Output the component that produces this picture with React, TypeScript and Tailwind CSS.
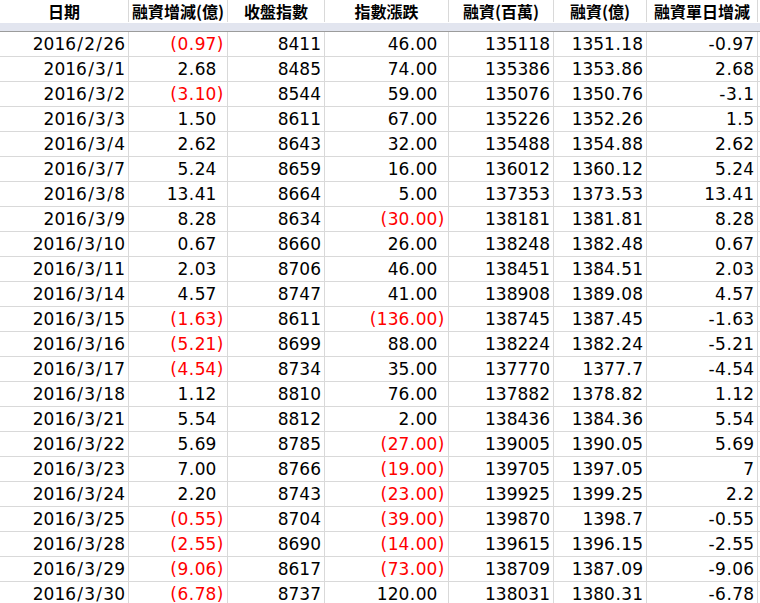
const headers = ["日期", "融資增減(億)", "收盤指數", "指數漲跌", "融資(百萬)", "融資(億)", "融資單日增減"];

const widths = ["w-[129px]", "w-[99px]", "w-[97px]", "w-[124px]", "w-[105px]", "w-[93px]", "w-[111px]"];

const rows = [
  ["2016/2/26", "-0.97", "8411", "46.00", "135118", "1351.18", "-0.97"],
  ["2016/3/1", "2.68", "8485", "74.00", "135386", "1353.86", "2.68"],
  ["2016/3/2", "-3.10", "8544", "59.00", "135076", "1350.76", "-3.1"],
  ["2016/3/3", "1.50", "8611", "67.00", "135226", "1352.26", "1.5"],
  ["2016/3/4", "2.62", "8643", "32.00", "135488", "1354.88", "2.62"],
  ["2016/3/7", "5.24", "8659", "16.00", "136012", "1360.12", "5.24"],
  ["2016/3/8", "13.41", "8664", "5.00", "137353", "1373.53", "13.41"],
  ["2016/3/9", "8.28", "8634", "-30.00", "138181", "1381.81", "8.28"],
  ["2016/3/10", "0.67", "8660", "26.00", "138248", "1382.48", "0.67"],
  ["2016/3/11", "2.03", "8706", "46.00", "138451", "1384.51", "2.03"],
  ["2016/3/14", "4.57", "8747", "41.00", "138908", "1389.08", "4.57"],
  ["2016/3/15", "-1.63", "8611", "-136.00", "138745", "1387.45", "-1.63"],
  ["2016/3/16", "-5.21", "8699", "88.00", "138224", "1382.24", "-5.21"],
  ["2016/3/17", "-4.54", "8734", "35.00", "137770", "1377.7", "-4.54"],
  ["2016/3/18", "1.12", "8810", "76.00", "137882", "1378.82", "1.12"],
  ["2016/3/21", "5.54", "8812", "2.00", "138436", "1384.36", "5.54"],
  ["2016/3/22", "5.69", "8785", "-27.00", "139005", "1390.05", "5.69"],
  ["2016/3/23", "7.00", "8766", "-19.00", "139705", "1397.05", "7"],
  ["2016/3/24", "2.20", "8743", "-23.00", "139925", "1399.25", "2.2"],
  ["2016/3/25", "-0.55", "8704", "-39.00", "139870", "1398.7", "-0.55"],
  ["2016/3/28", "-2.55", "8690", "-14.00", "139615", "1396.15", "-2.55"],
  ["2016/3/29", "-9.06", "8617", "-73.00", "138709", "1387.09", "-9.06"],
  ["2016/3/30", "-6.78", "8737", "120.00", "138031", "1380.31", "-6.78"],
];

// accounting format columns: negatives in red parens, positives padded like `_)`
const accounting = [1, 3];

// the sheet's font has wider punctuation than DejaVu, so pad those glyphs a bit
const Txt = ({ s }: { s: string }) => (
  <>
    {s.split("").map((ch, i) =>
      ch === "/" ? (
        <span key={i} className="px-[1.25px]">/</span>
      ) : ch === "." ? (
        <span key={i} className="px-[0.5px]">.</span>
      ) : ch === "(" || ch === ")" || ch === "-" ? (
        <span key={i} className="px-[0.5px]">{ch}</span>
      ) : (
        ch
      )
    )}
  </>
);

const Cell = ({ value, col }: { value: string; col: number }) => {
  if (accounting.includes(col)) {
    const neg = value.startsWith("-");
    return neg ? (
      <span className="text-[#ff0000]">
        <Txt s={`(${value.slice(1)})`} />
      </span>
    ) : (
      <span>
        <Txt s={value} />
        <span className="invisible px-[0.5px]">)</span>
      </span>
    );
  }
  return (
    <span>
      <Txt s={value} />
    </span>
  );
};

export default function App() {
  return (
    <div className="w-[760px] h-[603px] overflow-hidden bg-white text-black">
      <div className="flex h-[23px]">
        {headers.map((h, i) => (
          <div
            key={h}
            className={`${widths[i]} h-[22px] border-r border-[#d9d9d9] flex items-center justify-center font-bold text-[16px] leading-none font-['Noto_Sans_CJK_TC',sans-serif]`}
          >
            {h}
          </div>
        ))}
      </div>
      <div className="h-[8px] bg-[#e2e5ef] border-b border-[#9c9c9c] box-content" />
      <div className="font-['DejaVu_Sans','Verdana',sans-serif] text-[17px] leading-none">
        {rows.map((r) => (
          <div key={r[0]} className="flex h-[25px] border-b border-[#d9d9d9]">
            {r.map((v, i) => (
              <div
                key={i}
                className={`${widths[i]} border-r border-[#d9d9d9] flex items-center justify-end pr-[3px] whitespace-nowrap`}
              >
                <Cell value={v} col={i} />
              </div>
            ))}
          </div>
        ))}
      </div>
    </div>
  );
}
